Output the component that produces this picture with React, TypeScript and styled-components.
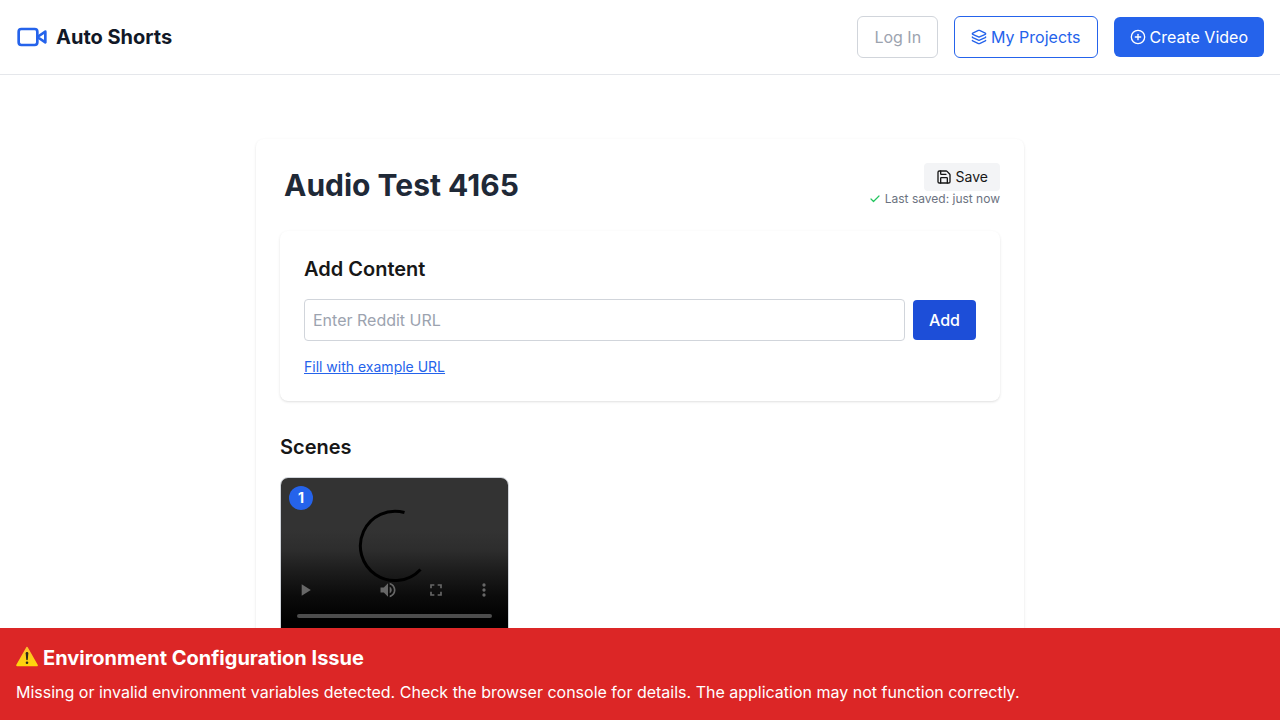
import React from "react";
import styled, { createGlobalStyle } from "styled-components";
import { Check, CirclePlus, Layers, Save } from "lucide-react";

const GlobalStyle = createGlobalStyle`
  *, *::before, *::after { box-sizing: border-box; }
  body {
    margin: 0;
    background: #fff;
    color: #171717;
    font-family: Inter, "Liberation Sans", sans-serif;
    font-size: 16px;
    line-height: 24px;
  }
  h1, h2, p { margin: 0; }
  button, input { font: inherit; }
  svg { display: block; flex-shrink: 0; }
`;

const Page = styled.div`
  display: flex;
  flex-direction: column;
  height: 100vh;
  overflow: hidden;
`;

const Header = styled.header`
  display: flex;
  flex-shrink: 0;
  align-items: center;
  justify-content: space-between;
  height: 75px;
  padding: 0 16px;
  border-bottom: 1px solid #e5e7eb;
`;

const Brand = styled.div`
  display: flex;
  align-items: center;
  gap: 8px;
  color: #2563eb;
`;

const BrandName = styled.span`
  color: #111827;
  font-size: 20px;
  line-height: 28px;
  font-weight: 700;
`;

const Nav = styled.nav`
  display: flex;
  align-items: center;
  gap: 16px;
`;

type Variant = "muted" | "outline" | "solid";

const navVariants: Record<Variant, string> = {
  muted: "border: 1px solid #d1d5db; color: #9ca3af; background: #fff;",
  outline: "border: 1px solid #2563eb; color: #2563eb; background: #fff;",
  solid: "border: 0; color: #fff; background: #2563eb;",
};

const NavButton = styled.button<{ $variant: Variant }>`
  display: flex;
  align-items: center;
  gap: 4px;
  padding: 8px 16px;
  border-radius: 6px;
  white-space: nowrap;
  ${({ $variant }) => navVariants[$variant]}
`;

const Main = styled.main`
  flex: 1;
  min-height: 0;
  width: 768px;
  margin: 64px auto 0;
  padding: 24px 24px 0;
  border-radius: 8px 8px 0 0;
  background: #fff;
  box-shadow: 0 1px 3px rgba(0, 0, 0, 0.1), 0 1px 2px -1px rgba(0, 0, 0, 0.1);
`;

const TitleRow = styled.div`
  display: flex;
  justify-content: space-between;
  align-items: flex-start;
  height: 68px;
`;

const Title = styled.h1`
  padding: 4px;
  color: #1f2937;
  font-size: 30px;
  line-height: 36px;
  font-weight: 700;
`;

const SaveArea = styled.div`
  display: flex;
  flex-direction: column;
  align-items: flex-end;
`;

const SaveButton = styled.button`
  display: flex;
  align-items: center;
  gap: 4px;
  padding: 4px 12px;
  border: 0;
  border-radius: 4px;
  background: #f3f4f6;
  color: #171717;
  font-size: 14px;
  line-height: 20px;
`;

const SavedNote = styled.div`
  display: flex;
  align-items: center;
  gap: 4px;
  color: #6b7280;
  font-size: 12px;
  line-height: 16px;
`;

const ContentCard = styled.section`
  height: 170px;
  padding: 24px;
  border-radius: 8px;
  background: #fff;
  box-shadow: 0 1px 3px rgba(0, 0, 0, 0.1), 0 1px 2px -1px rgba(0, 0, 0, 0.1);
`;

const SectionTitle = styled.h2`
  font-size: 20px;
  line-height: 28px;
  font-weight: 600;
`;

const UrlForm = styled.div`
  display: flex;
  align-items: center;
  gap: 8px;
  margin-top: 16px;
`;

const UrlInput = styled.input`
  flex: 1;
  min-width: 0;
  height: 42px;
  padding: 8px;
  border: 1px solid #d1d5db;
  border-radius: 4px;
  background: #fff;
  &::placeholder { color: #9ca3af; opacity: 1; }
`;

const AddButton = styled.button`
  padding: 8px 16px;
  border: 0;
  border-radius: 4px;
  background: #1d4ed8;
  color: #fff;
  font-weight: 500;
`;

const ExampleLink = styled.button`
  display: block;
  margin-top: 16px;
  padding: 0;
  border: 0;
  background: none;
  color: #2563eb;
  font-size: 14px;
  line-height: 20px;
  text-decoration: underline;
`;

const Scenes = styled.section`
  margin-top: 32px;
`;

const SceneGrid = styled.div`
  display: grid;
  grid-template-columns: repeat(3, 1fr);
  gap: 16px;
  margin-top: 16px;
`;

const SceneCard = styled.article`
  position: relative;
  border: 1px solid #d1d5db;
  border-radius: 8px;
  overflow: hidden;
`;

const Player = styled.div`
  display: flex;
  flex-direction: column;
  height: 192px;
  background: linear-gradient(#333 0, #333 52px, #2d2d2d 72px, #1e1e1e 91px, #0b0b0b 118px, #000 144px);
`;

const Controls = styled.div`
  display: flex;
  align-items: center;
  height: 48px;
  margin-top: 88px;
  padding: 0 8px;
  color: #676767;
`;

const ControlSlot = styled.span`
  display: flex;
  justify-content: center;
  width: 32px;
`;

const ControlGroup = styled.div`
  display: flex;
  gap: 16px;
  margin-left: auto;
`;

const Timeline = styled.div`
  height: 4px;
  margin: 0 16px;
  border-radius: 2px;
  background: #4d4d4d;
`;

const Spinner = styled.svg`
  position: absolute;
  top: 30px;
  left: 76px;
`;

const SceneNumber = styled.span`
  position: absolute;
  top: 8px;
  left: 8px;
  display: grid;
  place-items: center;
  width: 24px;
  height: 24px;
  border-radius: 50%;
  background: #2563eb;
  color: #fff;
  font-size: 14px;
  line-height: 20px;
  font-weight: 700;
`;

const Banner = styled.aside`
  position: fixed;
  right: 0;
  bottom: 0;
  left: 0;
  z-index: 50;
  height: 92px;
  padding: 16px;
  background: #dc2626;
  color: #fff;
`;

const BannerTitle = styled.div`
  display: flex;
  align-items: center;
  gap: 5px;
  font-size: 20px;
  line-height: 28px;
  font-weight: 700;
  svg { margin-bottom: 2px; }
`;

const BannerText = styled.p`
  margin-top: 8px;
`;

const BrandIcon = () => (
  <svg width="32" height="32" viewBox="0 0 24 24" fill="none" stroke="currentColor" strokeWidth="2" strokeLinecap="round" strokeLinejoin="round">
    <path d="m22 8-6 4 6 4V8Z" />
    <rect x="2" y="6" width="14" height="12" rx="2" />
  </svg>
);

const WarningIcon = () => (
  <svg width="22" height="22" viewBox="0 0 22 22">
    <defs>
      <linearGradient id="sign" x1="0" y1="0" x2="0" y2="1">
        <stop offset="0" stopColor="#fbc02d" />
        <stop offset="1" stopColor="#ffd60a" />
      </linearGradient>
    </defs>
    <path d="M11 1.9 20.8 19.3H1.2Z" fill="url(#sign)" stroke="url(#sign)" strokeWidth="2" strokeLinejoin="round" />
    <path d="M9.7 7.2c0-1.6 2.6-1.6 2.6 0l-.5 6.3c-.1 1-1.5 1-1.6 0Z" fill="#2d2a1c" />
    <circle cx="11" cy="16.7" r="1.3" fill="#2d2a1c" />
  </svg>
);

const PlayIcon = () => (
  <svg width="20" height="20" viewBox="0 0 24 24" fill="currentColor"><path d="M8 5v14l11-7z" /></svg>
);

const VolumeIcon = () => (
  <svg width="20" height="20" viewBox="0 0 24 24" fill="currentColor">
    <path d="M3 9v6h4l5 5V4L7 9H3zm13.5 3c0-1.77-1.02-3.29-2.5-4.03v8.05c1.48-.73 2.5-2.25 2.5-4.02zM14 3.23v2.06c2.89.86 5 3.54 5 6.71s-2.11 5.85-5 6.71v2.06c4.01-.91 7-4.49 7-8.77s-2.99-7.86-7-8.77z" />
  </svg>
);

const FullscreenIcon = () => (
  <svg width="20" height="20" viewBox="0 0 24 24" fill="currentColor">
    <path d="M7 14H5v5h5v-2H7v-3zm-2-4h2V7h3V5H5v5zm12 7h-3v2h5v-5h-2v3zM14 5v2h3v3h2V5h-5z" />
  </svg>
);

const MoreIcon = () => (
  <svg width="20" height="20" viewBox="0 0 24 24" fill="currentColor">
    <circle cx="12" cy="6" r="2" />
    <circle cx="12" cy="12" r="2" />
    <circle cx="12" cy="18" r="2" />
  </svg>
);

export default function App() {
  return (
    <Page>
      <GlobalStyle />
      <Header>
        <Brand>
          <BrandIcon />
          <BrandName>Auto Shorts</BrandName>
        </Brand>
        <Nav>
          <NavButton $variant="muted">Log In</NavButton>
          <NavButton $variant="outline"><Layers size={16} />My Projects</NavButton>
          <NavButton $variant="solid"><CirclePlus size={16} />Create Video</NavButton>
        </Nav>
      </Header>
      <Main>
        <TitleRow>
          <Title>Audio Test 4165</Title>
          <SaveArea>
            <SaveButton><Save size={16} />Save</SaveButton>
            <SavedNote><Check size={12} strokeWidth={2.4} color="#22c55e" />Last saved: just now</SavedNote>
          </SaveArea>
        </TitleRow>
        <ContentCard>
          <SectionTitle>Add Content</SectionTitle>
          <UrlForm>
            <UrlInput placeholder="Enter Reddit URL" />
            <AddButton>Add</AddButton>
          </UrlForm>
          <ExampleLink>Fill with example URL</ExampleLink>
        </ContentCard>
        <Scenes>
          <SectionTitle>Scenes</SectionTitle>
          <SceneGrid>
            <SceneCard>
              <Player>
                <Controls>
                  <ControlSlot><PlayIcon /></ControlSlot>
                  <ControlGroup>
                    <ControlSlot><VolumeIcon /></ControlSlot>
                    <ControlSlot><FullscreenIcon /></ControlSlot>
                    <ControlSlot><MoreIcon /></ControlSlot>
                  </ControlGroup>
                </Controls>
                <Timeline />
              </Player>
              <Spinner width="76" height="76" viewBox="0 0 76 76" fill="none" stroke="#000" strokeWidth="3">
                <path d="M47.5 4.5A34.7 34.7 0 1 0 63.5 61.5" />
              </Spinner>
              <SceneNumber>1</SceneNumber>
            </SceneCard>
          </SceneGrid>
        </Scenes>
      </Main>
      <Banner>
        <BannerTitle><WarningIcon />Environment Configuration Issue</BannerTitle>
        <BannerText>Missing or invalid environment variables detected. Check the browser console for details. The application may not function correctly.</BannerText>
      </Banner>
    </Page>
  );
}
